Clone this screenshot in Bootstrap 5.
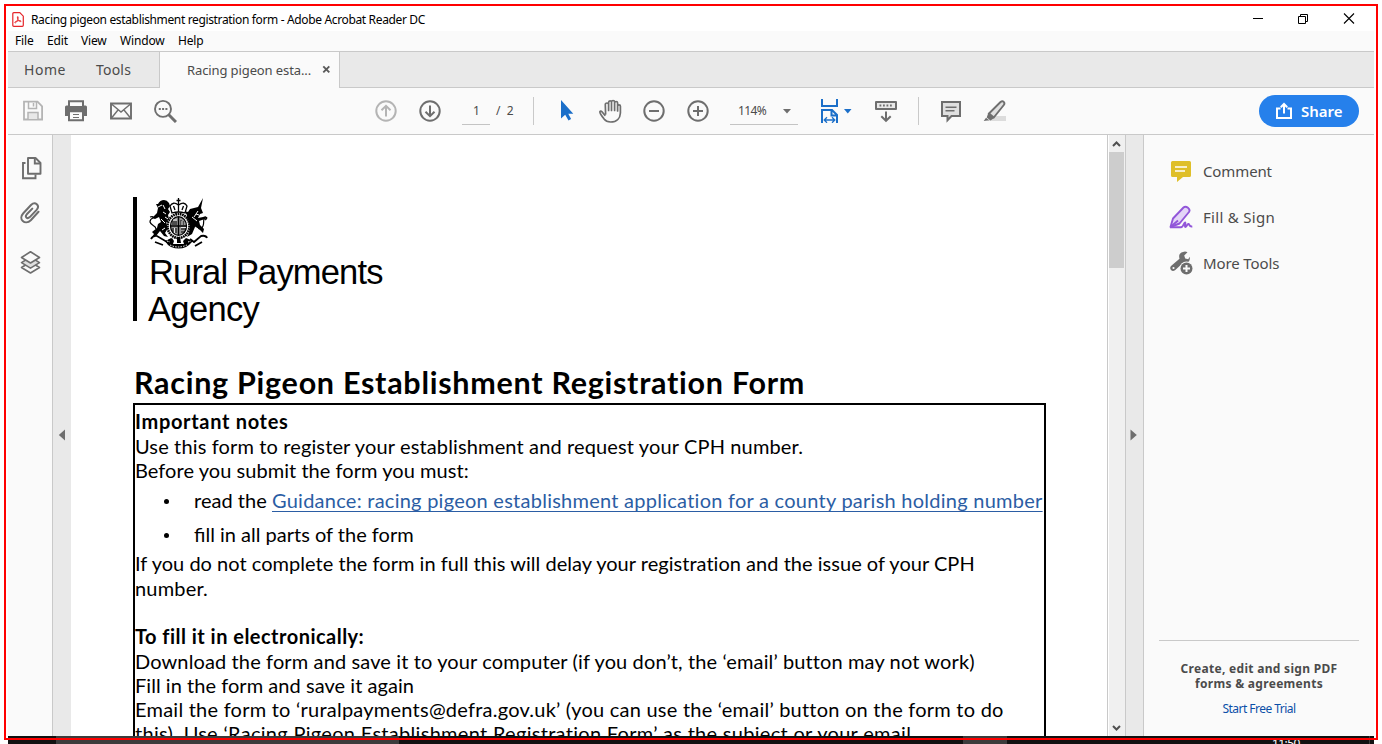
<!DOCTYPE html>
<html lang="en">
<head>
<meta charset="utf-8">
<meta name="viewport" content="width=device-width, initial-scale=1">
<title>Racing pigeon establishment registration form</title>
<link href="https://cdn.jsdelivr.net/npm/bootstrap@5.3.0/dist/css/bootstrap.min.css" rel="stylesheet">
<style>
:root{--line:#c9c9c9;--panel:#fafafa;--trough:#e9e9e9;--ink:#6e6e6e}
body{font-family:"Noto Sans","Open Sans",sans-serif;font-size:12px;line-height:16px;color:#000;background:#fff;width:1382px;height:744px;overflow:hidden;padding:6px 8px 0}
svg{display:block;flex:none}
.win-frame{position:absolute;left:4px;top:4px;width:1374px;height:736px;border:2px solid #f00;pointer-events:none;z-index:5}
.app-win{height:730px}
.title-bar{height:25px;padding:1px 11px 0 4px}
.title-text{font-size:12px;letter-spacing:-.353px;margin-left:7px;padding-top:1px}
.win-btns{gap:31px;padding-right:7px}
.menu-bar{height:21px;background:var(--panel);padding:2px 0 0 7px;border-bottom:1px solid var(--line);letter-spacing:-.15px}
.menu-bar a{color:#000;text-decoration:none}
.menu-bar a:nth-child(1){width:32px}
.menu-bar a:nth-child(2){width:34px}
.menu-bar a:nth-child(3){width:39px}
.menu-bar a:nth-child(4){width:58px}
.tab-bar{height:36px;background:var(--trough);border-bottom:1px solid var(--line);color:#4b4b4b;font-size:14px}
.home-tab{width:72px;padding-left:16px;letter-spacing:.54px}
.tools-tab{width:79px;padding-left:16px;letter-spacing:.2px}
.doc-tab{width:181px;height:36px;background:var(--panel);border:1px solid var(--line);border-width:0 1px;font-size:13px;padding:0 8px 0 27px;letter-spacing:-.11px}
.tool-bar{height:47px;background:var(--panel);border-bottom:1px solid var(--line);display:grid;align-items:center;padding-left:14px;color:#4b4b4b;
grid-template-columns:42px 45px 44px 221px 44px 44px 34px 37px 23px 42px 44px 44px 44px 88px 56px 44px 21px 44px 276px auto}
.fld{height:28px;border-bottom:1px solid #c4c4c4;padding-top:6px}
.pg-fld{width:28px;padding-left:11px}
.zoom-fld{width:68px;padding:6px 7px 0 8px;letter-spacing:-.6px}
.sep{width:1px;height:28px;background:var(--line)}
.share-btn{width:100px;height:32px;border-radius:16px;background:#2680eb;color:#fff;font-size:15px;font-weight:600;padding:0 16px 1px;gap:8px;border:0}
.work{height:601px}
.nav-rail{width:45px;background:var(--panel);border-right:1px solid var(--line);padding:21px 0 0 11px}
.nav-rail svg{margin-bottom:23px}
.nav-rail svg:nth-child(2){margin:-2px 0 25px}
.trough-l{width:18px;background:var(--trough);padding-bottom:1px}
.page-view{width:1037px;border-right:1px solid var(--line);padding:62px 0 0 62px;font-family:Lato,sans-serif;overflow:hidden}
.org-logo{height:124px;border-left:4px solid #000;padding-left:11px;font-family:"Liberation Sans",sans-serif;font-size:34.500px;line-height:37px;letter-spacing:-.85px}
.org-logo svg{margin-bottom:4px}
.org-logo .rural{margin-left:1px}
.org-logo .agency{letter-spacing:-.65px}
.form-title{font-size:30.500px;font-weight:700;line-height:36px;margin:43px 0 0 1px;letter-spacing:.72px;white-space:nowrap}
.notes{width:913px;height:400px;margin-top:3px;border:2px solid #000;font-size:20px;line-height:24px;padding-top:4px;white-space:nowrap}
.notes b{display:block}
.notes a{color:#2b5da4;letter-spacing:.255px;text-decoration-thickness:1px;text-underline-offset:3px;text-decoration-skip-ink:none}
.bul{display:grid;grid-template-columns:59px auto}
.bul::before{content:"";width:5px;height:5px;border-radius:50%;background:#000;margin:11px 0 0 29px}
.n1{letter-spacing:.68px}
.n2{letter-spacing:.133px;margin-top:1px}
.n3{letter-spacing:.05px}
.n4{letter-spacing:.03px;margin-top:6px}
.n5{margin-top:10px;letter-spacing:0}
.n6{margin-top:5px;letter-spacing:.026px}
.n7{margin-top:1px;letter-spacing:.18px}
.n8{margin-top:24px;letter-spacing:.475px}
.n9{margin-top:1px;letter-spacing:.125px}
.n10{letter-spacing:.045px}
.n11{letter-spacing:.236px}
.n12{letter-spacing:.3px}
.scroll-col{width:18px;background:#f0f0f0;border-left:1px solid #fff;border-right:1px solid var(--line);padding:2px 0 3px 0}
.scroll-thumb{width:15px;height:116px;background:#cdcdcd;margin-top:1px}
.trough-r{width:18px;background:var(--trough);border-right:1px solid var(--line);padding:0 1px 1px 0}
.tools-pane{width:230px;background:var(--panel);padding:24px 15px 0;color:#4b4b4b}
.tool-row{height:24px;margin-bottom:22px;padding-left:10px;gap:10px;font-size:15px;letter-spacing:-.12px}
.tool-row .wide{letter-spacing:.29px}
.promo{border-top:1px solid var(--line);height:96px;padding-top:20px;line-height:15px;text-align:center}
.promo b{letter-spacing:.3px}
.promo a{display:block;margin-top:10px;color:#0a4fa8;text-decoration:none;letter-spacing:-.54px}
.task-bar{height:8px;background:#111;display:grid;grid-template-columns:48px 343px 564px 44px 362px 1px auto;color:#fff}
.task-bar i{background:#3c3c3c;height:8px}
.clock{padding-left:265px;line-height:16px;letter-spacing:-.6px}
</style>
</head>
<body>
<div class="win-frame"></div>
<div class="app-win d-flex flex-column">
  <div class="title-bar d-flex align-items-center">
    <svg width="12" height="15" viewBox="0 0 12 15"><path d="M1.800.7h6l3.500 3.500v9.100q0 1-1 1H1.800q-1 0-1-1V1.700q0-1 1-1z" fill="#fff" stroke="#e5252a" stroke-width="1.200"/><path d="M3 10.800c-1.200-.6 1-1.700 3.500-2.100 3-.4 3.200.8 1.900.9C6.500 9.400 5 6 5.400 4.900c.8-1.300 1.300 1.300-.2 4C4.300 10.500 3.500 11.200 3 10.800z" fill="none" stroke="#e5252a" stroke-width=".9"/></svg>
    <span class="title-text">Racing pigeon establishment registration form - Adobe Acrobat Reader DC</span>
    <div class="win-btns ms-auto d-flex align-items-center">
      <svg width="14" height="12" viewBox="0 0 14 12"><path d="M1 5.500h10" stroke="#000"/></svg>
      <svg width="14" height="12" viewBox="0 0 14 12" fill="none" stroke="#000"><path d="M1.500 3.500h7v7h-7zM3.500 3.500v-2h7v7h-2"/></svg>
      <svg width="14" height="12" viewBox="0 0 14 12"><path d="M2 .5l10 10M12 .5L2 10.500" stroke="#000" stroke-width="1.100"/></svg>
    </div>
  </div>
  <nav class="menu-bar d-flex"><a href="#">File</a><a href="#">Edit</a><a href="#">View</a><a href="#">Window</a><a href="#">Help</a></nav>
  <div class="tab-bar d-flex align-items-center">
    <div class="home-tab">Home</div><div class="tools-tab">Tools</div>
    <div class="doc-tab d-flex align-items-center justify-content-between"><span>Racing pigeon esta...</span><svg width="9" height="9" viewBox="0 0 9 9"><path d="M1.300 1.300l6 6M7.300 1.300l-6 6" stroke="#5a5a5a" stroke-width="1.900"/></svg></div>
  </div>
  <div class="tool-bar">
    <svg width="24" height="24" viewBox="0 0 24 24" fill="none" stroke="#b4b4b4" stroke-width="1.800"><path d="M2 2.700h13.500l4.600 4.600v13.200H2z"/><path d="M6.500 3v6.500h8V3M11.500 4v3.500" stroke-width="1.500"/><path d="M6 20v-6.500h10V20" fill="#e8e8e8" stroke-width="1.500"/></svg>
    <svg width="24" height="24" viewBox="0 0 24 24"><path d="M1 8q0-1.500 1.500-1.500h19Q23 6.500 23 8v9h-5v-3H6v3H1z" fill="#6e6e6e"/><path d="M5 7V2.300h14V7M5 12.300h14v8.900H5z" fill="#fafafa" stroke="#6e6e6e" stroke-width="2"/><path d="M9 15.500h6M9 18.500h6" stroke="#6e6e6e" stroke-width="1"/></svg>
    <svg width="24" height="24" viewBox="0 0 24 24" fill="none" stroke="#6e6e6e"><path d="M2 4.500h20v15H2z" stroke-width="1.900"/><path d="M2.500 5l9.500 8 9.500-8M2.500 19l6.500-8M21.500 19L15 11" stroke-width="1.400"/></svg>
    <svg width="24" height="24" viewBox="0 0 24 24" fill="none" stroke="#6e6e6e"><circle cx="10" cy="9.900" r="8" stroke-width="1.900"/><path d="M15.500 15.500l7.500 7.500" stroke-width="3"/><path d="M5.800 10h2M9.100 10h2M12.400 10h2" stroke-width="2"/></svg>
    <svg width="24" height="24" viewBox="0 0 24 24" fill="none" stroke="#b4b4b4" stroke-width="2"><circle cx="12" cy="12" r="9.700"/><path d="M12 17.500V7M7.500 11.300L12 6.800l4.500 4.500"/></svg>
    <svg width="24" height="24" viewBox="0 0 24 24" fill="none" stroke="#6e6e6e" stroke-width="2"><circle cx="12" cy="12" r="9.700"/><path d="M12 6.500V17M7.500 12.700l4.500 4.500 4.500-4.500"/></svg>
    <div class="fld pg-fld">1</div>
    <div class="pt-0">/&nbsp;&nbsp;2</div>
    <div class="sep"></div>
    <svg width="24" height="24" viewBox="0 0 24 24"><path d="M5 1v18.500l4.200-3.700 3.300 5.700 2.600-1.500-2.800-5.200h5z" fill="#1b6fc9"/></svg>
    <svg width="24" height="24" viewBox="0 0 24 24" fill="none" stroke="#6e6e6e" stroke-width="1.700" stroke-linejoin="round" stroke-linecap="round"><path d="M6.800 16.300L4 12.800Q2.600 11.300 1.900 12.600C1.600 14.900 4.300 17.300 6.300 20.300Q8.200 23 12.600 23C19 23 22.200 19 22.400 14V7.200C22.400 5.300 19.600 5.300 19.600 7.200V12V4C19.600 2 16.600 2 16.600 4V11.500V3C16.600 1 13.500 1 13.500 3V11.500V3C13.500 1.400 10.600 1.400 10.600 3.400V11.500V5.500C10.600 3.500 7.300 3.500 7.300 5.500L7.600 15"/></svg>
    <svg width="24" height="24" viewBox="0 0 24 24" fill="none" stroke="#6e6e6e" stroke-width="2"><circle cx="12" cy="12" r="9.700"/><path d="M7 12h10"/></svg>
    <svg width="24" height="24" viewBox="0 0 24 24" fill="none" stroke="#6e6e6e" stroke-width="2"><circle cx="12" cy="12" r="9.700"/><path d="M7 12h10M12 7v10"/></svg>
    <div class="fld zoom-fld d-flex justify-content-between"><span>114%</span><svg class="mt-1" width="8" height="8" viewBox="0 0 8 8"><path d="M0 2h8L4 6.500z" fill="#6e6e6e"/></svg></div>
    <svg width="34" height="24" viewBox="0 0 34 24"><path d="M4 0v7h15V0M4 24V11h10l5 5v8M13.500 11v5.500H19" fill="none" stroke="#1b6fc9" stroke-width="2"/><path d="M6.500 21h10M9 18.200L6.200 21 9 23.800M14 18.200l2.800 2.800-2.800 2.800" fill="none" stroke="#1b6fc9" stroke-width="1.300"/><path d="M26 10h7.500l-3.700 4.400z" fill="#1b6fc9"/></svg>
    <svg width="24" height="24" viewBox="0 0 24 24" fill="none" stroke="#6e6e6e" stroke-width="2"><path d="M2 3h20v7H2z" fill="#e8e8e8" stroke-linejoin="round"/><path d="M5.500 6.500h13.500" stroke-dasharray="1.800 1.700"/><path d="M12 12.500v9M7.300 17.200l4.700 4.600 4.700-4.600"/></svg>
    <div class="sep"></div>
    <svg width="24" height="24" viewBox="0 0 24 24" fill="none" stroke="#6e6e6e"><path d="M3 3h18v14h-8.500l-4 4.300V17H3z" fill="#e0e0e0" stroke-width="2"/><path d="M6.500 8.200h11M6.500 11.700h9" stroke-width="1.400"/></svg>
    <svg width="24" height="24" viewBox="0 0 24 24"><path d="M9 17h14v5H4z" fill="#dcdcdc"/><path d="M6 14.500L17.500 3c2.500-2 5 .6 3.300 3L10.800 18.500z" fill="#e0e0e0" stroke="#6e6e6e" stroke-width="1.900"/><path d="M5.200 14.200l6 4.800-3.700 2.500-3.800-3zM3 18.800l3.200 2.500-5.500.8z" fill="#6e6e6e"/></svg>
    <button class="share-btn d-flex align-items-center"><svg width="18" height="18" viewBox="0 0 18 18" fill="none" stroke="#fff" stroke-width="2"><path d="M5.500 6.500H2v9.500h14V6.500h-3.500M9 11.500V2.500M5.800 5.200L9 2l3.200 3.200"/></svg><span>Share</span></button>
  </div>
  <div class="work d-flex">
    <div class="nav-rail">
      <svg width="24" height="24" viewBox="0 0 24 24" fill="none" stroke="#6e6e6e" stroke-width="1.900"><path d="M6.500 7H4v15.300h12.500V18.500" /><path d="M9 2h7.500l5 5v10.800H9z" fill="#fafafa" stroke-linejoin="round"/><path d="M15.800 2v5.500H21"/></svg>
      <svg width="24" height="24" viewBox="0 0 24 24" fill="none" stroke="#6e6e6e" stroke-width="2" stroke-linecap="round"><path d="M19.500 10.800l-7.700 8.400c-5.800 5.600-13-1-7.500-7L12 4c4.300-4.300 9.300.8 5.600 4.900l-6.800 7.200c-2.800 2.500-5.200-.3-3-2.800l5.500-5.700"/></svg>
      <svg width="24" height="24" viewBox="0 0 24 24" fill="#fafafa" stroke="#6e6e6e" stroke-width="1.600" stroke-linejoin="round"><path d="M2.500 17.500L11.500 12l9 5.500-9 5.500z"/><path d="M2.500 12.600L11.500 7l9 5.600-9 5.500z" fill="#dedede"/><path d="M2.500 7.500l9-5.700 9 5.700-9 5.500z"/></svg>
    </div>
    <div class="trough-l d-flex align-items-center justify-content-center"><svg width="8" height="12" viewBox="0 0 8 12"><path d="M7 .5v11L.8 6z" fill="#6e6e6e"/></svg></div>
    <main class="page-view">
      <div class="org-logo">
        <svg width="62" height="53" viewBox="0 0 62 53">
          <g fill="none" stroke="#000" stroke-width="1.200">
            <path d="M8 32C8 28 3 29 2 25q0-3 3-4 1-2-3-1M53 32c4-3 2-8 3-10 3-3 4-1 1 1"/>
            <path d="M3 42q2-4 6-3l10 6 4-3M42 42l4 3 7-6q5-1 6 2M7 45l8 3M54 45l-7 4" stroke-width="1.800"/>
          </g>
          <path d="M10 7q2-4 6-4 3 0 5 3l1 3-2 3 2 3-2 3 1 4-3 4 2 5-3 5 3 4-4-1-4-5-4 5-4 1 2-3-2-2 5-4 1-4 3-2-2-5-4 2-3-1 5-5 1-5-2-4z"/>
          <path d="M50 10l5-9-2 10 2 5-3 1-2 4 5-1 3-1-1 3-6 2 1 4 4 4-1 4-3-3-5-3-3 7-5 3 2-4 1-7-4-5 1-6-3-4 4 1 2-3z"/>
          <path d="M10 10l4-2M15 8l2 4M17 20l3 2M13 22l4 4M50 14l-4 6M44 20l5 4M14 33l3-2M47 30l3 2M15 15l3 2M48 17l3 1" stroke="#fff" stroke-width="1"/>
          <g fill="#fff" stroke="#000" stroke-width="1.300">
            <path d="M24 16l-2-7q3-5 8.500-1 6-4 8.500 1l-2 7q-6.500-2-13 0z"/><path d="M30.500 1v14M28.500 3.500h4M25.500 9l1.500 4M35.500 9L34 13"/>
            <ellipse cx="30.500" cy="29" rx="11" ry="12" stroke-width="2.600" stroke-dasharray="1.700 .6"/>
            <ellipse cx="30.500" cy="29" rx="8" ry="9.300" fill="#999"/>
            <path d="M30.500 20v18M22.500 29h16" stroke-width="1.400"/>
          </g>
          <path d="M24 25h5M24 27h5M33 23v5M35 24v4M25 31v4M28 31v5M33 32h5M33 35h4" stroke="#000" stroke-width="1"/>
          <path d="M25 23h4M33 30.500h5M26.500 31v5M34 24v4" stroke="#fff" stroke-width=".8"/>
          <path d="M17 44l7-3 2 3-1 3h11l-1-3 3-3 7 3-4 4-3 2q-7 3-15 0l-3-2zM29 40h3l1 6h-4z"/>
          <path d="M22 48q8 4 17 0M19 44l3 1M40 45l3-1" stroke="#fff" stroke-dasharray="1.500 1.200" fill="none"/>
        </svg>
        <div class="rural">Rural Payments</div><div class="agency">Agency</div>
      </div>
      <h1 class="form-title">Racing Pigeon Establishment Registration Form</h1>
      <section class="notes">
        <b class="n1">Important notes</b>
        <div class="n2">Use this form to register your establishment and request your CPH number.</div>
        <div class="n3">Before you submit the form you must:</div>
        <div class="bul n4"><div>read the <a href="#">Guidance: racing pigeon establishment application for a county parish holding number</a></div></div>
        <div class="bul n5"><div>fill in all parts of the form</div></div>
        <div class="n6">If you do not complete the form in full this will delay your registration and the issue of your CPH</div>
        <div class="n7">number.</div>
        <b class="n8">To fill it in electronically:</b>
        <div class="n9">Download the form and save it to your computer (if you don’t, the ‘email’ button may not work)</div>
        <div class="n10">Fill in the form and save it again</div>
        <div class="n11">Email the form to ‘ruralpayments@defra.gov.uk’ (you can use the ‘email’ button on the form to do</div>
        <div class="n12">this). Use ‘Racing Pigeon Establishment Registration Form’ as the subject or your email</div>
      </section>
    </main>
    <div class="scroll-col d-flex flex-column">
      <svg width="15" height="14" viewBox="0 0 15 14"><path d="M4 9l3.500-3.500L11 9" fill="none" stroke="#505050" stroke-width="2"/></svg>
      <div class="scroll-thumb"></div>
      <svg class="mt-auto" width="15" height="14" viewBox="0 0 15 14"><path d="M4 7l3.500 3.500L11 7" fill="none" stroke="#505050" stroke-width="2"/></svg>
    </div>
    <div class="trough-r d-flex align-items-center justify-content-center"><svg width="8" height="12" viewBox="0 0 8 12"><path d="M.5.500v11L6.800 6z" fill="#6e6e6e"/></svg></div>
    <aside class="tools-pane d-flex flex-column">
      <div class="tool-row d-flex align-items-center"><svg width="24" height="24" viewBox="0 0 24 24"><path d="M3.500 2h17q1.500 0 1.500 1.500v13q0 1.500-1.500 1.500H14l-6 5v-5H3.500Q2 18 2 16.500v-13Q2 2 3.500 2z" fill="#dfbf29"/><path d="M6 8h12M6 12h10" stroke="#fff" stroke-width="1.500"/></svg><span>Comment</span></div>
      <div class="tool-row d-flex align-items-center"><svg width="24" height="24" viewBox="0 0 24 24" fill="none" stroke="#9256d9" stroke-width="1.900" stroke-linejoin="round"><path d="M1.500 22L4 13.500 14.500 2.500c2.500-2.300 7.500 1.500 5.500 4.500L10.500 18.500z" fill="#e4d5f7"/><path d="M1 22.300h11c2.500 0 3-5.300 4.200-4.800s-1.200 4.500.3 4.500 1.500-3.500 3-3 .3 3 3.800 2.500M2 21.500l7-6"/></svg><span class="wide">Fill &amp; Sign</span></div>
      <div class="tool-row d-flex align-items-center"><svg width="24" height="24" viewBox="0 0 24 24"><path d="M18.500 1.200l-3.300 3.300 1 3 3 .8 1.600-2.500q.6 4.500-2.800 6-2.300.9-4 .2l-8 7.300q-2.300 1.400-4-.3-1.600-2 0-4l8.500-7.200Q9 2 14 .9q2.500-.7 4.500.3z" fill="#6e6e6e"/><circle cx="4.500" cy="17" r="1.100" fill="#fafafa"/><circle cx="17.500" cy="17.500" r="7" fill="#fafafa"/><circle cx="17.500" cy="17.500" r="6" fill="#6e6e6e"/><path d="M17.500 14v7M14 17.500h7" stroke="#fafafa" stroke-width="2"/></svg><span>More Tools</span></div>
      <div class="promo mt-auto"><b class="d-block">Create, edit and sign PDF<br>forms &amp; agreements</b><a href="#">Start Free Trial</a></div>
    </aside>
  </div>
</div>
<div class="task-bar"><span></span><i></i><span></span><i></i><div class="clock">11:50</div><i></i></div>
<script src="https://cdn.jsdelivr.net/npm/bootstrap@5.3.0/dist/js/bootstrap.bundle.min.js"></script>
</body>
</html>
